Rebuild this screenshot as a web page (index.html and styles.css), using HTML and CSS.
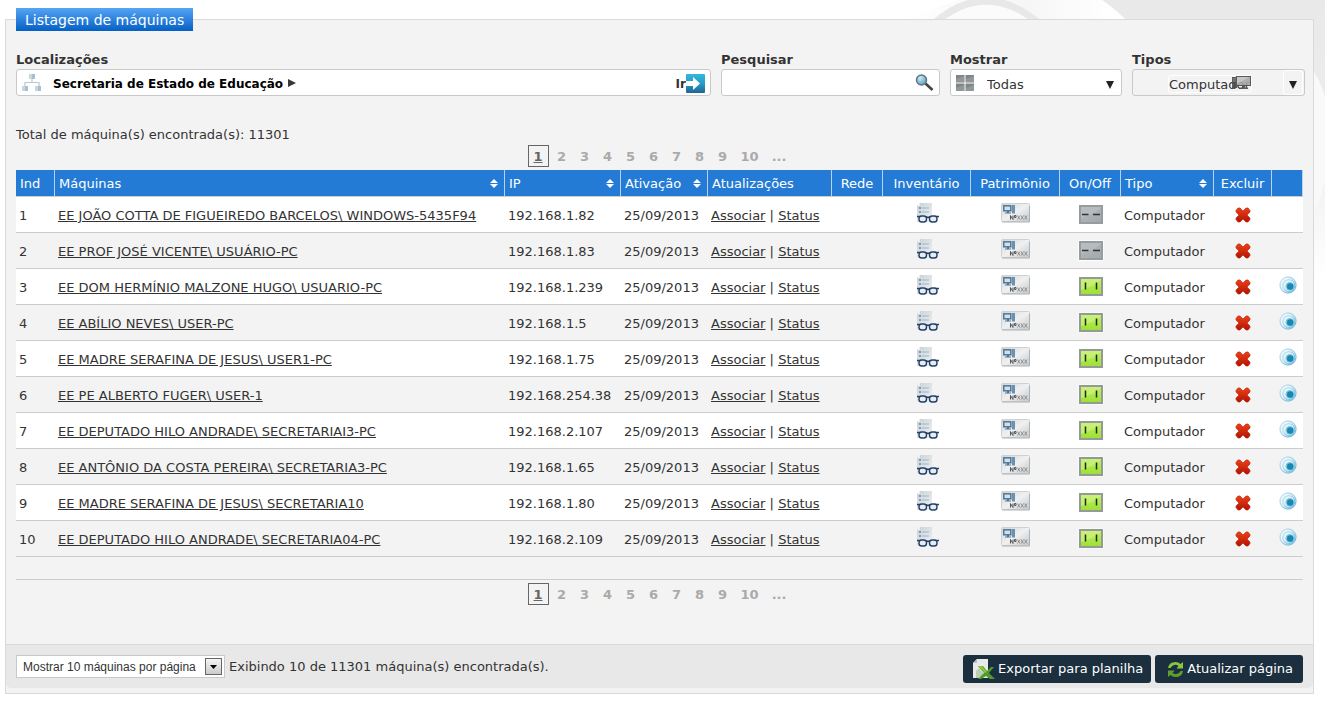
FILE: index.html
```html
<!DOCTYPE html>
<html lang="pt-BR">
<head>
<meta charset="utf-8">
<title>Listagem de máquinas</title>
<link rel="stylesheet" href="styles.css">
</head>
<body>
<svg class="swirl" width="445" height="280" viewBox="0 0 445 280" aria-hidden="true">
  <defs>
    <linearGradient id="haze" x1="0" y1="0" x2="0" y2="1"><stop offset="0" stop-color="#e9e9e9"/><stop offset=".5" stop-color="#ededed"/><stop offset="1" stop-color="#fff"/></linearGradient>
    <linearGradient id="fade" x1="0" y1="0" x2="1" y2="0"><stop offset="0" stop-color="#fff"/><stop offset=".3" stop-color="#f6f6f6"/><stop offset=".5" stop-color="#fff"/><stop offset="1" stop-color="#fff"/></linearGradient>
  </defs>
  <path d="M20 20 Q60 6 80 0 H445 V20Z" fill="url(#fade)"/>
  <path d="M222 0H445V280H430V20H246Q234 8 222 0Z" fill="url(#haze)"/>
  <path d="M51 26Q106-24 162 26" fill="#fbfbfb" stroke="#e8e8e8" stroke-width="7"/>
  <path d="M430 66Q441 80 445 98V180Q438 210 430 220Z" fill="#f9f9f9"/>
</svg>

<svg width="0" height="0" class="sprite" aria-hidden="true">
  <defs>
    <linearGradient id="g-paper" x1="0" y1="0" x2="1" y2="1"><stop offset="0" stop-color="#c9d0d4"/><stop offset="1" stop-color="#f1f3f4"/></linearGradient>
    <linearGradient id="g-plate" x1="0" y1="0" x2="1" y2="1"><stop offset="0" stop-color="#d2d5d7"/><stop offset=".5" stop-color="#eff0f1"/><stop offset="1" stop-color="#c3c7ca"/></linearGradient>
    <linearGradient id="g-red" x1="0" y1="0" x2="0" y2="1"><stop offset="0" stop-color="#f0401a"/><stop offset="1" stop-color="#b01402"/></linearGradient>
    <linearGradient id="g-on" x1="0" y1="0" x2="0" y2="1"><stop offset="0" stop-color="#c2ee6c"/><stop offset="1" stop-color="#9be032"/></linearGradient>
    <linearGradient id="g-off" x1="0" y1="0" x2="1" y2="1"><stop offset="0" stop-color="#b4babd"/><stop offset="1" stop-color="#a2a8ab"/></linearGradient>
    <linearGradient id="g-go" x1="0" y1="0" x2="0" y2="1"><stop offset="0" stop-color="#30b8de"/><stop offset=".5" stop-color="#2a9cc6"/><stop offset="1" stop-color="#1e6496"/></linearGradient>
    <radialGradient id="g-lens" cx=".35" cy=".3" r=".8"><stop offset="0" stop-color="#cfeaf6"/><stop offset="1" stop-color="#4f9cc4"/></radialGradient>
    <linearGradient id="g-wave" x1="0" y1="0" x2="1" y2="1"><stop offset="0" stop-color="#cfe9f4"/><stop offset="1" stop-color="#6cb8da"/></linearGradient>
    <symbol id="i-inventory" viewBox="0 0 24 22">
      <path d="M5 1H17V20H2V4Z" fill="url(#g-paper)"/>
      <path d="M2 4L5 1V4Z" fill="#eef1f2"/>
      <path d="M4 6h2M4 10h2" stroke="#5b87ab" stroke-width="1.500"/>
      <path d="M7 6h7M7 10h7" stroke="#9db6c9"/>
      <path d="M2 14.500h4M10 14.500l3 1 3-1M20 14.500h4" fill="none" stroke="#22406a" stroke-width="1.600"/>
      <rect x="4" y="14" width="7.500" height="6" rx="2.800" fill="#e9edf0" stroke="#22406a" stroke-width="1.400"/>
      <rect x="14.500" y="14" width="7.500" height="6" rx="2.800" fill="#e9edf0" stroke="#22406a" stroke-width="1.400"/>
    </symbol>
    <symbol id="i-asset" viewBox="0 0 29 20">
      <rect x=".5" y=".5" width="28" height="18" rx="1" fill="url(#g-plate)" stroke="#cdd1d3"/>
      <path d="M1 19H28.500V3" fill="none" stroke="#adb2b5"/>
      <rect x="2.800" y="2.800" width="7" height="5" fill="#d3e0e8" stroke="#4f7697" stroke-width="1.500"/>
      <path d="M6 8h2v1.500h2v1H4v-1h2Z" fill="#4f7697"/>
      <path d="M11 2h3v8.500h-3Z" fill="#6c91ae"/>
      <path d="M9.500 16.500v-4l2.500 4v-4M13.500 12.500h1.500v2h-1.500z" fill="none" stroke="#555"/>
      <path d="M16.500 12.500l2.500 4m0-4l-2.500 4M20 12.500l2.500 4m0-4l-2.500 4M23.500 12.500l2.500 4m0-4l-2.500 4" stroke="#777" stroke-width=".7"/>
    </symbol>
    <symbol id="i-off" viewBox="0 0 26 21">
      <rect width="26" height="21" fill="#fff" opacity=".8"/>
      <rect x="2" y="2" width="22" height="17" fill="url(#g-off)" stroke="#979d9f" stroke-width="2"/>
      <path d="M3 14Q14 11 23 4V3H3Z" fill="#bdc2c5" opacity=".6"/>
      <path d="M4 10.500h6.500M15 10.500h7" stroke="#333" stroke-width="1.500"/>
    </symbol>
    <symbol id="i-on" viewBox="0 0 26 21">
      <rect width="26" height="21" fill="#fff" opacity=".5"/>
      <rect x="2" y="2" width="22" height="17" fill="url(#g-on)" stroke="#949b96" stroke-width="2"/>
      <path d="M3 14Q14 11 23 4V3H3Z" fill="#d0f385" opacity=".6"/>
      <path d="M7.500 6.500v7M18.500 6.500v7" stroke="#1d2a08" stroke-width="1.500"/>
    </symbol>
    <symbol id="i-delete" viewBox="0 0 16 16">
      <path d="M1 3.500L3 1h2l3 3 3-3h2l2 2.500v1.500L12 8l3 3v1.500L13 15h-2l-3-3-3 3H3l-2-2.500V11l3-3-3-3Z" fill="url(#g-red)" stroke="#c42a10" stroke-width=".7"/>
    </symbol>
    <symbol id="i-wave" viewBox="0 0 18 18">
      <circle cx="9" cy="9" r="8" fill="#eef8fc" stroke="url(#g-wave)" stroke-width="1.300"/>
      <circle cx="9.800" cy="9.500" r="5.900" fill="#e8f5fb" stroke="url(#g-wave)" stroke-width="1.300"/>
      <circle cx="10.800" cy="10.200" r="4.300" fill="#7cc4e0"/>
      <circle cx="11.200" cy="10.500" r="3.200" fill="#1c86b3"/>
    </symbol>
  </defs>
</svg>

<main class="panel">
  <h1 class="legend">Listagem de máquinas</h1>

  <form class="filters">
    <div class="field">
      <label for="go">Localizações</label>
      <div class="box">
        <svg class="tree" width="20" height="19" viewBox="0 0 20 19" aria-hidden="true">
          <path d="M10 5v4M3 13V9.500h14V13" fill="none" stroke="#b7c8d3" stroke-width="1.200"/>
          <path d="M7 1h6v5H7ZM0 13h6v5H0ZM13 13h6v5h-6Z" fill="#a9bfcd"/>
          <path d="M7 1h3v5H7ZM0 13h3v5H0ZM13 13h3v5h-3Z" fill="#c9d6de"/>
        </svg>
        <a class="crumb" href="#">Secretaria de Estado de Educação</a>
        <svg class="crumb-arrow" width="8" height="8" viewBox="0 0 8 8" aria-hidden="true"><path d="M0 0L8 4 0 8Z" fill="#33393d"/></svg>
        <button class="go" id="go" type="button">Ir<svg width="19" height="19" viewBox="0 0 19 19" aria-hidden="true">
          <rect width="19" height="19" rx="1" fill="url(#g-go)"/>
          <path d="M0 7h7V3l7 6.500L7 16v-4H0Z" fill="#fff"/>
        </svg></button>
      </div>
    </div>
    <div class="field">
      <label for="q">Pesquisar</label>
      <div class="box">
        <input id="q" type="text">
        <svg class="lens" width="19" height="18" viewBox="0 0 19 18" aria-hidden="true">
          <path d="M10.500 9.500L17.500 16" stroke="#444" stroke-width="2.600"/>
          <circle cx="6.500" cy="6" r="5" fill="url(#g-lens)" stroke="#66747c" stroke-width="1.500"/>
        </svg>
      </div>
    </div>
    <div class="field">
      <label for="show">Mostrar</label>
      <div class="box">
        <select id="show"><option>Todas</option></select>
        <svg class="tiles" width="18" height="16" viewBox="0 0 18 16" aria-hidden="true">
          <path d="M0 0h8.500v7.500H0ZM9.500 0H18v7.500H9.500ZM0 8.500h8.500V16H0ZM9.500 8.500H18V16H9.500Z" fill="#7f8687"/>
          <path d="M0 7V4L8 1v6ZM10 7V4l8-3v6ZM0 16v-3l8-3v6ZM10 16v-3l8-3v6Z" fill="#929899"/>
        </svg>
        <svg class="caret" width="8" height="8" viewBox="0 0 8 8" aria-hidden="true"><path d="M0 0H8L4 8Z" fill="#222"/></svg>
      </div>
    </div>
    <div class="field">
      <label for="kind">Tipos</label>
      <div class="box box-grey">
        <select id="kind"><option>Computador</option></select>
        <span class="kind-tag"></span>
        <svg class="pc" width="19" height="13" viewBox="0 0 19 13" aria-hidden="true">
          <path d="M0 1h5v11H0Z" fill="#4c4c4c"/><path d="M1 3h3M1 5h3" stroke="#888"/>
          <rect x="4.500" y=".5" width="14" height="9" fill="#a4a8aa" stroke="#4a4a4a"/>
          <path d="M5 8L17 1H5Z" fill="#bfc3c5"/><path d="M10 10h3v1.500h3V13H7v-1.500h3Z" fill="#555"/>
        </svg>
        <span class="kind-drop"></span>
        <svg class="caret" width="8" height="8" viewBox="0 0 8 8" aria-hidden="true"><path d="M0 0H8L4 8Z" fill="#222"/></svg>
      </div>
    </div>
  </form>

  <p class="total">Total de máquina(s) encontrada(s): 11301</p>

  <nav class="pages" aria-label="Páginas">
    <a href="#" class="current">1</a><a href="#">2</a><a href="#">3</a><a href="#">4</a><a href="#">5</a><a href="#">6</a><a href="#">7</a><a href="#">8</a><a href="#">9</a><a href="#">10</a><a href="#">...</a>
  </nav>

  <table class="machines">
    <colgroup><col class="c-ind"><col><col class="c-ip"><col class="c-date"><col class="c-upd"><col class="c-net"><col class="c-inv"><col class="c-pat"><col class="c-on"><col class="c-type"><col class="c-del"><col class="c-live"></colgroup>
    <thead>
      <tr><th>Ind</th><th class="sort">Máquinas</th><th class="sort">IP</th><th class="sort">Ativação</th><th>Atualizações</th><th class="mid">Rede</th><th class="mid">Inventário</th><th class="mid">Patrimônio</th><th class="mid">On/Off</th><th class="sort">Tipo</th><th class="mid">Excluir</th><th></th></tr>
    </thead>
    <tbody id="rows"></tbody>
  </table>

  <nav class="pages pages-bottom" aria-label="Páginas, rodapé">
    <a href="#" class="current">1</a><a href="#">2</a><a href="#">3</a><a href="#">4</a><a href="#">5</a><a href="#">6</a><a href="#">7</a><a href="#">8</a><a href="#">9</a><a href="#">10</a><a href="#">...</a>
  </nav>

  <footer class="bar">
    <div class="per-page">
      <select aria-label="Máquinas por página"><option>Mostrar 10 máquinas por página</option></select>
      <span class="drop"><svg width="7" height="4" viewBox="0 0 7 4" aria-hidden="true"><path d="M0 0H7L3.500 4Z" fill="#000"/></svg></span>
    </div>
    <span class="showing">Exibindo 10 de 11301 máquina(s) encontrada(s).</span>
    <button type="button" class="action action-export"><svg width="22" height="20" viewBox="0 0 22 20" aria-hidden="true">
      <path d="M4 0H15V19H0V4Z" fill="#e6eae8"/><path d="M4 0V4H0Z" fill="#b9c2be"/>
      <path d="M3 19v-7l3-3 4 5v5Z" fill="#b9cdb0"/>
      <path d="M5 7h5l4 5 4-4h3l-5 6 6 6h-5l-4-3-5 3H5l6-6Z" fill="#4f9a2c"/><path d="M5 7h4l5 6-2 1Z" fill="#8cc63f"/>
    </svg>Exportar para planilha</button>
    <button type="button" class="action action-reload"><svg width="17" height="17" viewBox="0 0 17 17" aria-hidden="true">
      <path d="M1 7Q2 1 8.500 1q3 0 5 2L16 1v6.500h-6.500L11.500 5Q9 3 6 4.500 4 5.500 3.500 7Z" fill="#8bc53f"/>
      <path d="M16 10Q15 16 8.500 16q-3 0-5-2L1 16V9.500h6.500L5.500 12Q8 14 11 12.500q2-1 2.500-2.500Z" fill="#5ea02e"/>
    </svg>Atualizar página</button>
  </footer>
</main>
<script src="rows.js"></script>
</body>
</html>
```
FILE: styles.css
```css
* { box-sizing: border-box; }
body { margin: 0; padding: 19px 11px 10px 5px; background: #fff; color: #333; font: 13px/16px "DejaVu Sans", Verdana, sans-serif; }
a { color: #333; }
button, select, input { font: inherit; color: inherit; margin: 0; }
.swirl { position: absolute; top: 0; right: 0; z-index: -1; }
.sprite { position: absolute; }

.panel { background: #f3f3f3; border: 1px solid #dadada; padding-bottom: 5px; }
.legend { width: max-content; margin: -12px 0 0 10px; padding: 1px 9px 0; font-size: 14px; font-weight: 400; line-height: 22px; color: #fff; background: linear-gradient(#56a4f5, #0460c4); }

.filters { display: grid; grid-template-columns: 1fr 219px 172px 173px; gap: 10px; padding: 20px 8px 0 10px; }
.field > label { display: block; font-weight: 700; line-height: 18px; }
.box { position: relative; display: flex; align-items: center; height: 27px; background: #fff; border: 1px solid #c9c9c9; border-radius: 3px; }
.box-grey { background: #f3f3f3; }
.box input, .box select { width: 100%; height: 100%; border: 0; background: transparent; outline: 0; appearance: none; padding: 4px 34px 0 36px; }
.box input { padding-left: 6px; }
.tree { margin-left: 5px; }
.crumb { margin: 3px 5px 0 11px; font-size: 12px; font-weight: 700; color: #000; text-decoration: none; }
.go { display: flex; align-items: center; margin-left: auto; padding: 2px 5px 0 0; border: 0; background: none; font-size: 12px; font-weight: 700; }
.lens { position: absolute; right: 5px; top: 4px; }
.tiles { position: absolute; left: 5px; top: 5px; }
.caret { position: absolute; right: 7px; top: 11px; }
.kind-tag { position: absolute; left: 35px; top: 5px; width: 84px; height: 18px; border: 1px solid #fff; border-radius: 3px; }
.kind-drop { position: absolute; right: 1px; top: 0; width: 20px; height: 25px; border: 1px solid #fff; border-radius: 3px; }
.pc { position: absolute; left: 99px; top: 6px; opacity: .9; }

.total { margin: 31px 10px 2px; }

.pages { display: flex; justify-content: center; gap: 3px; margin: 0 10px; padding-bottom: 3px; font-weight: 700; }
.pages a { min-width: 20px; height: 22px; text-align: center; color: #aaa; text-decoration: none; padding: 0 5px; line-height: 24px; }
.pages .current { min-width: 21px; color: #666; text-decoration: underline; border: 1px solid #666; line-height: 22px; }
.pages-bottom { margin-top: 22px; padding: 3px 0 39px; border-top: 1px solid #ccc; }

.machines { width: calc(100% - 20px); margin: 0 10px; table-layout: fixed; border-collapse: separate; border-spacing: 0; }
.c-ind { width: 39px; } .c-ip { width: 116px; } .c-date { width: 87px; } .c-upd { width: 124px; }
.c-net { width: 51px; } .c-inv { width: 88px; } .c-pat { width: 89px; } .c-on { width: 61px; }
.c-type { width: 93px; } .c-del { width: 58px; } .c-live { width: 31px; }
.machines th { position: relative; height: 27px; padding: 2px 4px 0; font-weight: 400; text-align: left; color: #fff; background: #237bd5; border-right: 1px solid #b9d3ee; border-bottom: 1px solid #ccc; white-space: nowrap; }
.sort::before, .sort::after { content: ""; position: absolute; right: 6px; border: 4px solid transparent; }
.sort::before { top: 5px; border-bottom-color: #fff; }
.sort::after { top: 14px; border-top-color: #fff; }
.machines td { height: 36px; padding: 3px 3px 0; background: #fff; border-bottom: 1px solid #ccc; white-space: nowrap; vertical-align: middle; }
.machines tr:nth-child(even) td { background: #f3f3f3; }
.machines th.mid { padding-left: 0; padding-right: 0; text-align: center; }
.machines td.mid { padding: 0; text-align: center; }
.machines td.raised { padding-bottom: 4px; }
.machines td svg { display: block; }
.icon-btn { display: block; margin: 0 auto; padding: 0; border: 0; background: none; }

.bar { display: flex; align-items: flex-start; padding: 10px 10px 5px; background: #e8e8e8; border-top: 1px solid #dadada; border-radius: 0 0 5px 5px; }
.per-page { position: relative; width: 209px; height: 23px; margin-right: 4px; background: #fff; border: 1px solid #c9c9c9; }
.per-page select { width: 100%; height: 100%; padding: 0 0 0 6px; appearance: none; border: 0; background: none; font: 12px "Liberation Sans", Arial, sans-serif; }
.drop { position: absolute; right: 2px; top: 2px; width: 17px; height: 17px; display: flex; align-items: center; justify-content: center; border: 1px solid #666; background: linear-gradient(#f4f4f4, #ccc); pointer-events: none; }
.showing { flex: 1; line-height: 23px; }
.action { display: flex; align-items: center; gap: 3px; height: 28px; margin-left: 4px; border: 0; border-radius: 3px; background: #1b2f3e; color: #fff; white-space: nowrap; }
.action-export { padding: 0 8px 0 10px; }
.action-reload { padding: 0 10px 0 12px; }
```
FILE: rows.js
```javascript
const machines = [
  ["EE JOÃO COTTA DE FIGUEIREDO BARCELOS\\ WINDOWS-5435F94", "192.168.1.82", false],
  ["EE PROF JOSÉ VICENTE\\ USUÁRIO-PC", "192.168.1.83", false],
  ["EE DOM HERMÍNIO MALZONE HUGO\\ USUARIO-PC", "192.168.1.239", true],
  ["EE ABÍLIO NEVES\\ USER-PC", "192.168.1.5", true],
  ["EE MADRE SERAFINA DE JESUS\\ USER1-PC", "192.168.1.75", true],
  ["EE PE ALBERTO FUGER\\ USER-1", "192.168.254.38", true],
  ["EE DEPUTADO HILO ANDRADE\\ SECRETARIAI3-PC", "192.168.2.107", true],
  ["EE ANTÔNIO DA COSTA PEREIRA\\ SECRETARIA3-PC", "192.168.1.65", true],
  ["EE MADRE SERAFINA DE JESUS\\ SECRETARIA10", "192.168.1.80", true],
  ["EE DEPUTADO HILO ANDRADE\\ SECRETARIA04-PC", "192.168.2.109", true]
];

const icon = (name, w, h) => `<svg width="${w}" height="${h}" aria-hidden="true"><use href="#i-${name}"/></svg>`;
const iconButton = (label, svg) => `<button type="button" class="icon-btn" aria-label="${label}">${svg}</button>`;

document.getElementById("rows").innerHTML = machines.map(([name, ip, on], i) => `<tr>
  <td>${i + 1}</td>
  <td><a href="#">${name}</a></td>
  <td>${ip}</td>
  <td>25/09/2013</td>
  <td><a href="#">Associar</a> | <a href="#">Status</a></td>
  <td></td>
  <td class="mid raised">${iconButton("Inventário", icon("inventory", 24, 22))}</td>
  <td class="mid raised">${iconButton("Patrimônio", icon("asset", 29, 20))}</td>
  <td class="mid">${iconButton(on ? "Ligado" : "Desligado", icon(on ? "on" : "off", 26, 21))}</td>
  <td>Computador</td>
  <td class="mid">${iconButton("Excluir", icon("delete", 16, 16))}</td>
  <td class="mid raised">${on ? iconButton("Monitorar", icon("wave", 18, 18)) : ""}</td>
</tr>`).join("");
```
